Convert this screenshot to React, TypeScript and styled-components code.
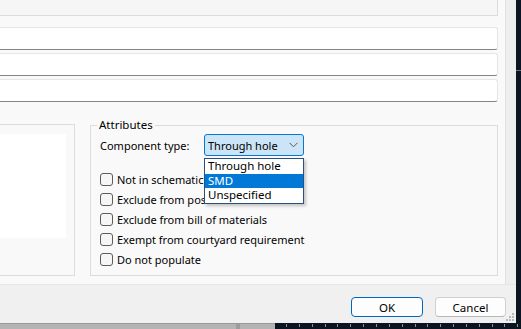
import styled, { createGlobalStyle } from "styled-components";

const GlobalStyle = createGlobalStyle`
  html, body {
    margin: 0;
    padding: 0;
    background: #0b1421;
    overflow: hidden;
  }
  body {
    font-family: "Noto Sans", "Liberation Sans", sans-serif;
    font-size: 11px;
    color: #000;
  }
`;

const attributes = [
    "Not in schematic",
    "Exclude from position files",
    "Exclude from bill of materials",
    "Exempt from courtyard requirement",
    "Do not populate",
];

const typeOptions = ["Through hole", "SMD", "Unspecified"];

export default function App() {
    return (
        <Page>
            <GlobalStyle />
            <TopRow>
                <Window>
                    <Main>
                        <Content>
                            <TopPanel />
                            <InputStack>
                                <Field />
                                <Field />
                                <Field />
                            </InputStack>
                            <GroupsRow>
                                <LeftGroup>
                                    <Preview />
                                </LeftGroup>
                                <Group>
                                    <Legend>Attributes</Legend>
                                    <TypeRow>
                                        <TypeLabel>Component type:</TypeLabel>
                                        <ComboWrap>
                                            <Combo>
                                                <span>Through hole</span>
                                                <svg width="9" height="6" viewBox="0 0 9 6">
                                                    <path d="M0.5 0.8 L4.5 4.8 L8.5 0.8" fill="none" stroke="#5a5a5a" strokeWidth="1" />
                                                </svg>
                                            </Combo>
                                            <DropList>
                                                {typeOptions.map((o) => (
                                                    <Option key={o} $selected={o === "SMD"}>{o}</Option>
                                                ))}
                                            </DropList>
                                        </ComboWrap>
                                    </TypeRow>
                                    <CheckList>
                                        {attributes.map((a) => (
                                            <CheckRow key={a}>
                                                <Box />
                                                <span>{a}</span>
                                            </CheckRow>
                                        ))}
                                    </CheckList>
                                </Group>
                            </GroupsRow>
                        </Content>
                        <ScrollBand />
                    </Main>
                    <Footer>
                        <Button $primary>OK</Button>
                        <Button>Cancel</Button>
                        <Grip width="8" height="8" viewBox="0 0 8 8">
                            <rect x="6" y="0" width="2" height="2" fill="#b8b8b8" />
                            <rect x="3" y="3" width="2" height="2" fill="#b8b8b8" />
                            <rect x="6" y="3" width="2" height="2" fill="#b8b8b8" />
                            <rect x="0" y="6" width="2" height="2" fill="#b8b8b8" />
                            <rect x="3" y="6" width="2" height="2" fill="#b8b8b8" />
                            <rect x="6" y="6" width="2" height="2" fill="#b8b8b8" />
                        </Grip>
                    </Footer>
                </Window>
                <Side>
                    <SideLine />
                </Side>
            </TopRow>
            <BottomStrip>
                <GreyBar $width={236} />
                <Divider />
                <GreyBar $width={35} />
                <Ruler />
            </BottomStrip>
        </Page>
    );
}

const Page = styled.div`
    width: 521px;
    height: 329px;
    display: flex;
    flex-direction: column;
    overflow: hidden;
`;

const TopRow = styled.div`
    display: flex;
    height: 323px;
`;

const Window = styled.div`
    width: 516px;
    display: flex;
    flex-direction: column;
    background: #f9f9f9;
`;

const Main = styled.div`
    display: flex;
    height: 284px;
`;

const Content = styled.div`
    width: 505px;
    padding-right: 7px;
    box-sizing: border-box;
    display: flex;
    flex-direction: column;
`;

const TopPanel = styled.div`
    height: 16px;
    box-sizing: border-box;
    background: #f6f6f6;
    border-bottom: 1px solid #dcdcdc;
    border-right: 1px solid #dcdcdc;
`;

const InputStack = styled.div`
    margin-top: 11px;
    display: flex;
    flex-direction: column;
    gap: 3px;
`;

const Field = styled.div`
    height: 23px;
    box-sizing: border-box;
    background: #fff;
    border: 1px solid #e6e6e6;
    border-left: none;
    border-bottom: 1px solid #858585;
    border-radius: 0 3px 3px 0;
`;

const GroupsRow = styled.div`
    margin-top: 16px;
    display: flex;
    align-items: flex-start;
`;

const LeftGroup = styled.div`
    margin-top: 6px;
    width: 75px;
    height: 152px;
    box-sizing: border-box;
    border: 1px solid #dcdcdc;
    border-left: none;
    padding-top: 9px;
`;

const Preview = styled.div`
    width: 66px;
    height: 104px;
    background: #fff;
`;

const Group = styled.fieldset`
    margin: 0 0 0 15px;
    width: 408px;
    height: 158px;
    box-sizing: border-box;
    border: 1px solid #dcdcdc;
    padding: 2px 9px 5px 9px;
    min-inline-size: 0;
`;

const Legend = styled.legend`
    margin-left: -3px;
    padding: 0 2px;
    line-height: 14px;
    font-size: 11.5px;
`;

const TypeRow = styled.div`
    display: flex;
    align-items: center;
    height: 22px;
`;

const TypeLabel = styled.span`
    width: 104px;
`;

const ComboWrap = styled.div`
    position: relative;
`;

const Combo = styled.div`
    width: 100px;
    height: 22px;
    box-sizing: border-box;
    display: flex;
    align-items: center;
    justify-content: space-between;
    padding: 0 5px 0 3px;
    background: #cce4f7;
    border: 1px solid #0078d4;
    border-radius: 3px;
`;

const DropList = styled.div`
    position: absolute;
    top: calc(100% + 2px);
    left: 0;
    width: 100px;
    box-sizing: border-box;
    background: #fff;
    border: 1px solid #2a4f80;
    box-shadow: 2px 2px 3px rgba(0, 0, 0, 0.22);
    z-index: 10;
`;

const Option = styled.div<{ $selected?: boolean }>`
    height: 14.5px;
    line-height: 14.5px;
    padding-left: 3px;
    font-size: 11.5px;
    background: ${(p) => (p.$selected ? "#0078d7" : "#fff")};
    color: ${(p) => (p.$selected ? "#fff" : "#000")};
`;

const CheckList = styled.div`
    margin-top: 13px;
    display: flex;
    flex-direction: column;
`;

const CheckRow = styled.div`
    height: 20px;
    display: flex;
    align-items: center;
    gap: 4px;
    white-space: nowrap;
`;

const Box = styled.div`
    width: 13px;
    height: 13px;
    box-sizing: border-box;
    border: 1px solid #5c5c5c;
    border-radius: 3px;
    background: #f6f6f6;
    flex-shrink: 0;
`;

const ScrollBand = styled.div`
    flex: 1;
    background: #eeeeee;
    border-left: 1px solid #e2e2e2;
`;

const Footer = styled.div`
    position: relative;
    flex: 1;
    display: flex;
    justify-content: flex-end;
    align-items: flex-start;
    gap: 12px;
    padding: 12px 10px 0 0;
    background: #f0f0f0;
    border-top: 1px solid #e6e6e6;
`;

const Button = styled.button<{ $primary?: boolean }>`
    width: ${(p) => (p.$primary ? "72px" : "71px")};
    height: 20px;
    box-sizing: border-box;
    padding: 0;
    font-family: inherit;
    font-size: 11.5px;
    color: #000;
    background: #fdfdfd;
    border: 1px solid ${(p) => (p.$primary ? "#0067c0" : "#d0d0d0")};
    border-bottom-color: ${(p) => (p.$primary ? "#0067c0" : "#b8b8b8")};
    border-radius: 4px;
`;

const Grip = styled.svg`
    position: absolute;
    right: 2px;
    bottom: 2px;
`;

const Side = styled.div`
    flex: 1;
    background: #0b1421;
`;

const SideLine = styled.div`
    margin-top: 70px;
    height: 1px;
    background: #6d737b;
`;

const BottomStrip = styled.div`
    display: flex;
    height: 6px;
`;

const GreyBar = styled.div<{ $width: number }>`
    width: ${(p) => p.$width}px;
    background: #b4b4b4;
    border-top: 1px solid #999;
`;

const Divider = styled.div`
    width: 4px;
    background: #9d9d9d;
    border-top: 1px solid #999;
`;

const Ruler = styled.div`
    flex: 1;
    background-color: #0b1421;
    background-image: repeating-linear-gradient(
        to right,
        transparent 0,
        transparent 11px,
        #8a9099 11px,
        #8a9099 12px,
        transparent 12px,
        transparent 12.85px
    );
    background-size: 100% 3px;
    background-repeat: no-repeat;
    background-position: 0 1px;
`;
